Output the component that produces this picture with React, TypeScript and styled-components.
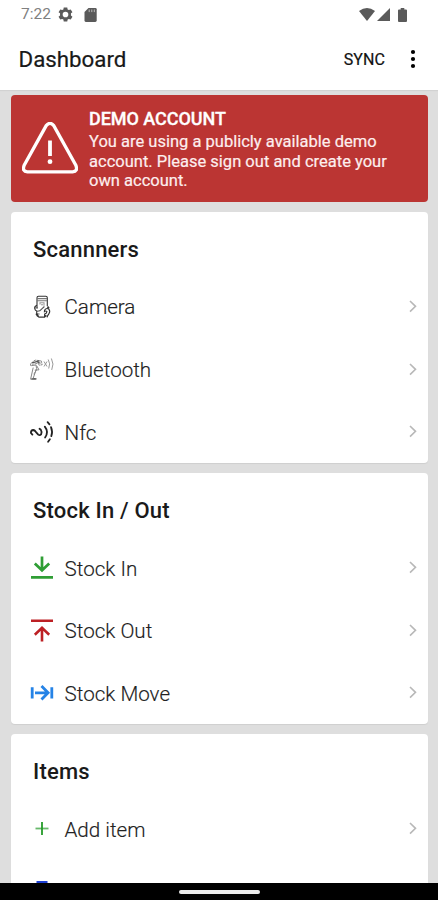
import React from "react";
import styled, { createGlobalStyle } from "styled-components";

const GlobalStyle = createGlobalStyle`
  *, *::before, *::after { box-sizing: border-box; }
  body { margin: 0; background: #fff; overflow: hidden; }
  svg { display: block; flex: none; }
`;

const Screen = styled.div`
  width: 438px;
  height: 900px;
  display: flex;
  flex-direction: column;
  overflow: hidden;
  font-family: Roboto, "Liberation Sans", sans-serif;
  color: #1a1a1a;
  background: #dedede;
`;

const StatusBar = styled.header`
  flex: none;
  height: 29px;
  padding: 0 31px 0 21px;
  display: flex;
  align-items: center;
  justify-content: space-between;
  background: #fff;
  color: #5a5a5a;
`;

const StatusGroup = styled.div<{ $gap: number }>`
  display: flex;
  align-items: center;
  gap: ${(p) => p.$gap}px;
`;

const Clock = styled.span`
  width: 30px;
  font-size: 15.5px;
  line-height: 27px;
  color: #808080;
  white-space: nowrap;
`;

const AppBar = styled.div`
  flex: none;
  height: 61px;
  padding: 0 22px 0 18.5px;
  display: flex;
  align-items: center;
  background: #fff;
  box-shadow: 0 1px 1px #d2d2d2;
`;

const Title = styled.h1`
  margin: 0;
  flex: 1;
  font-size: 22.3px;
  font-weight: 400;
  line-height: 59px;
  -webkit-text-stroke: 0.2px #111;
`;

const SyncButton = styled.button`
  border: 0;
  padding: 0;
  background: none;
  font: 400 16px/58px Roboto, sans-serif;
  letter-spacing: 0.1px;
  color: #111;
  margin-right: 25px;
  -webkit-text-stroke: 0.2px #111;
`;

const MenuButton = styled.button`
  border: 0;
  padding: 0 0 2px;
  background: none;
  color: #000;
`;

const Content = styled.main`
  flex: 1;
  min-height: 0;
  overflow: hidden;
  padding: 4.5px 10.5px 0 11px;
  display: flex;
  flex-direction: column;
  gap: 9.5px;
`;

const Banner = styled.section`
  flex: none;
  height: 107.5px;
  padding: 0 11px;
  display: flex;
  gap: 11px;
  border-radius: 4px;
  background: #bb3533;
  color: #fff;
  align-items: center;
`;

const BannerCopy = styled.div`
  padding-top: 2px;
`;

const BannerTitle = styled.h2`
  margin: 0;
  font-size: 18px;
  font-weight: 500;
  line-height: 21px;
  letter-spacing: -0.05px;
  -webkit-text-stroke: 0.3px #fff;
`;

const BannerText = styled.p`
  margin: 3px 0 0;
  font-size: 16.53px;
  line-height: 19.5px;
  color: #fdeeee;
  white-space: nowrap;
  -webkit-text-stroke: 0.2px #fdeeee;
`;

const Card = styled.section`
  flex: none;
  height: 251.7px;
  border-radius: 4px;
  background: #fff;
  box-shadow: 0 1px 1px #cfcfcf;
`;

const CardTitle = styled.h2`
  margin: 0;
  height: 64px;
  padding: 12.5px 0 0 22px;
  font-size: 22px;
  font-weight: 500;
  line-height: 51px;
  letter-spacing: 0.2px;
`;

const Row = styled.div`
  height: 62.7px;
  padding: 0 9.5px 0 18px;
  display: flex;
  align-items: center;
`;

const IconSlot = styled.span`
  width: 26px;
  height: 26px;
  flex: none;
  display: grid;
  place-items: center;
`;

const RowLabel = styled.span`
  flex: 1;
  padding: 1px 0 0 9.5px;
  font-size: 20.6px;
  font-weight: 300;
  line-height: 28px;
  color: #222;
  -webkit-text-stroke: 0.15px #222;
`;

const NavBar = styled.footer`
  flex: none;
  height: 17.5px;
  display: flex;
  justify-content: center;
  padding-top: 7.5px;
  background: #000;
`;

const Handle = styled.div`
  width: 81px;
  height: 4px;
  border-radius: 2px;
  background: #ececec;
`;

const GearIcon = () => (
  <svg width="17" height="17" viewBox="0 0 24 24" fill="currentColor">
    <path
      fillRule="evenodd"
      d="M9.5 2h5l.5 2.8 1.7 1 2.7-1 2.4 4-2.1 1.6v3l2.1 1.8-2.4 4-2.7-1-1.7 1-.5 2.8h-5l-.5-2.8-1.7-1-2.7 1-2.4-4 2.1-1.8v-3L2.2 8.8l2.4-4 2.7 1 1.7-1zM12 8a4 4 0 1 0 0 8 4 4 0 0 0 0-8z"
    />
  </svg>
);

const SdCardIcon = () => (
  <svg width="13" height="14" viewBox="0 0 13 14">
    <path d="M4.5 0H11.5Q12.7 0 12.7 1.2V12.6Q12.7 14 11.3 14H1.8Q.5 14 .5 12.6V4z" fill="currentColor" />
    <path d="M5.2 1.5v2.6M7.8 1.5v2.6M10.3 1.5v2.6" stroke="#bbb" strokeWidth="1" />
  </svg>
);

const WifiIcon = () => (
  <svg width="16" height="13" viewBox="0 0 16 13" fill="currentColor">
    <path d="M0 3Q8-2.8 16 3L8 13z" />
  </svg>
);

const SignalIcon = () => (
  <svg width="13" height="13" viewBox="0 0 13 13" fill="currentColor">
    <path d="M13 0v13H0z" />
  </svg>
);

const BatteryIcon = () => (
  <svg width="9" height="14" viewBox="0 0 9 14" fill="currentColor">
    <path d="M2.7 0h3.6v1.5H8q1 0 1 1V13q0 1-1 1H1q-1 0-1-1V2.5q0-1 1-1h1.7z" />
  </svg>
);

const MoreIcon = () => (
  <svg width="6" height="20" viewBox="0 0 6 20" fill="currentColor">
    <circle cx="3" cy="3" r="2.1" />
    <circle cx="3" cy="10" r="2.1" />
    <circle cx="3" cy="17" r="2.1" />
  </svg>
);

const WarningIcon = () => (
  <svg width="56" height="52" viewBox="0 0 56 52" fill="none" stroke="#fff" strokeLinecap="round">
    <path d="M24.2 3.6 2.2 43.2Q-.2 49.6 5.4 49.9H50.6Q56.2 49.6 53.8 43.2L31.8 3.6Q28-.9 24.2 3.6z" strokeWidth="3.3" />
    <path d="M28 18.5V34" strokeWidth="3.8" strokeLinecap="butt" />
    <circle cx="28" cy="39.7" r="2.4" fill="#fff" stroke="none" />
  </svg>
);

const CameraScanIcon = () => (
  <svg width="26" height="26" viewBox="0 0 26 26" fill="none" stroke="#333" strokeWidth="1.1">
    <path d="M8 14V3.8Q8 2.3 9.5 2.3h7.3q1.5 0 1.5 1.5V12" />
    <path d="M8 4.6h10M8 6.7h10" stroke="#777" />
    <path d="M11 10.5V8.8h4v3M12 10.8h2" stroke="#999" />
    <path d="M8 11.2q-2.8 1-2.3 3.5.4 1.7 2 2.2v2.3q.5 2.2 2.1 3.9h5.8v-3q2.3-.6 2.3-2.6-1.2-1-2.5.2-.2-1.6 1-2.5 1.7-1.4 3.6.2 1.6 2-.2 4.6-1.4 1.5-1.7 3.4" />
    <path d="M8 17.2q3 .2 4.6-2.1l2.8-2.6M6 14h3M7.5 20h3" stroke="#555" />
    <path d="M7.2 19.5 9 22.5M15.5 22.5l2-1M18.5 12.5l1.5 2" strokeWidth="1.8" />
  </svg>
);

const BluetoothScannerIcon = () => (
  <svg width="26" height="26" viewBox="0 0 26 26" fill="none" stroke="#888" strokeWidth="1">
    <path d="m1.5 6.8 4.5-3.7 6.2.8 1 3.8-3 .6-.8-2-4.8.8-2.7 2z" strokeDasharray="3 .7" />
    <path d="m3 8.5 4-.5.6 3.6-3.4 9.5 2.4 1-5 .1 2.6-11.6M7.7 8.8l2.3 4-4.2.4M4.8 17.3l3-5" />
    <path d="m3 5.8 7.5-2M8.5 5.3l3 1M2.5 21.8h5" stroke="#555" strokeWidth="1.2" />
    <path d="m15 4.5 3 5M15 9.5l3-5M19.2 2.5q2.6 4.2.5 9M22.4 1.5q3 5.5.3 11.4" stroke="#999" />
  </svg>
);

const NfcIcon = () => (
  <svg width="26" height="26" viewBox="0 0 26 26" fill="none" stroke="#222" strokeWidth="1.8" strokeLinecap="round" strokeLinejoin="round">
    <path d="M3.4 15.6 1.9 14q0-2.8 2.4-3 1.3.2 2.3 1.6l2.6 3q1.6 1.2 2.9-.2 1.1-2.6-.3-4.6l-1.3-1" />
    <path d="M15.8 7.6q4.2 5.2.3 11" />
    <path d="m18.6 3.2 1.9 2.1M22 8.1q1.9 4.6.3 9M20.9 20.2l-1.8 2.5" />
  </svg>
);

const StockInIcon = () => (
  <svg width="26" height="26" viewBox="0 0 26 26" fill="none" stroke="#2f9e35" strokeWidth="2.7">
    <path d="M13 1.6v13M5.8 8.5l7.2 6.8 7.2-6.8M2 22.4h22" />
  </svg>
);

const StockOutIcon = () => (
  <svg width="26" height="26" viewBox="0 0 26 26" fill="none" stroke="#bd2024" strokeWidth="2.6">
    <path d="M2 2.8h22M13 23.5v-13M5.8 16.7 13 9.9l7.2 6.8" />
  </svg>
);

const StockMoveIcon = () => (
  <svg width="26" height="26" viewBox="0 0 26 26" fill="none" stroke="#2583e6" strokeWidth="2.8">
    <path d="M3.2 7.2v11.2M22.8 7.2v11.2M6 12.8h13M12.5 6l6.6 6.8-6.6 6.8" />
  </svg>
);

const AddIcon = () => (
  <svg width="26" height="26" viewBox="0 0 26 26" fill="none" strokeWidth="1.8">
    <path d="M6.5 12.5h13" stroke="#68b96b" />
    <path d="M13 6v13" stroke="#249b29" />
  </svg>
);

const ItemsIcon = () => (
  <svg width="26" height="26" viewBox="0 0 26 26">
    <rect x="7.5" y="2" width="11" height="22" fill="#1d3fd1" />
  </svg>
);

const Chevron = () => (
  <svg width="10" height="14" viewBox="0 0 10 14" fill="none" stroke="#b8b8b8" strokeWidth="1.6">
    <path d="m2 1 5.5 5.3L2 11.6" />
  </svg>
);

type Item = { label: string; icon: React.ReactNode };

const sections: { title: string; items: Item[] }[] = [
  {
    title: "Scannners",
    items: [
      { label: "Camera", icon: <CameraScanIcon /> },
      { label: "Bluetooth", icon: <BluetoothScannerIcon /> },
      { label: "Nfc", icon: <NfcIcon /> },
    ],
  },
  {
    title: "Stock In / Out",
    items: [
      { label: "Stock In", icon: <StockInIcon /> },
      { label: "Stock Out", icon: <StockOutIcon /> },
      { label: "Stock Move", icon: <StockMoveIcon /> },
    ],
  },
  {
    title: "Items",
    items: [
      { label: "Add item", icon: <AddIcon /> },
      { label: "", icon: <ItemsIcon /> },
    ],
  },
];

export default function App() {
  return (
    <Screen>
      <GlobalStyle />
      <StatusBar>
        <StatusGroup $gap={6}>
          <Clock>7:22</Clock>
          <StatusGroup $gap={10}>
            <GearIcon />
            <SdCardIcon />
          </StatusGroup>
        </StatusGroup>
        <StatusGroup $gap={8}>
          <StatusGroup $gap={2}>
            <WifiIcon />
            <SignalIcon />
          </StatusGroup>
          <BatteryIcon />
        </StatusGroup>
      </StatusBar>
      <AppBar>
        <Title>Dashboard</Title>
        <SyncButton>SYNC</SyncButton>
        <MenuButton aria-label="More options">
          <MoreIcon />
        </MenuButton>
      </AppBar>
      <Content>
        <Banner>
          <WarningIcon />
          <BannerCopy>
            <BannerTitle>DEMO ACCOUNT</BannerTitle>
            <BannerText>
              You are using a publicly available demo
              <br />
              account. Please sign out and create your
              <br />
              own account.
            </BannerText>
          </BannerCopy>
        </Banner>
        {sections.map((section) => (
          <Card key={section.title}>
            <CardTitle>{section.title}</CardTitle>
            {section.items.map((item, i) => (
              <Row key={i}>
                <IconSlot>{item.icon}</IconSlot>
                <RowLabel>{item.label}</RowLabel>
                <Chevron />
              </Row>
            ))}
          </Card>
        ))}
      </Content>
      <NavBar>
        <Handle />
      </NavBar>
    </Screen>
  );
}
